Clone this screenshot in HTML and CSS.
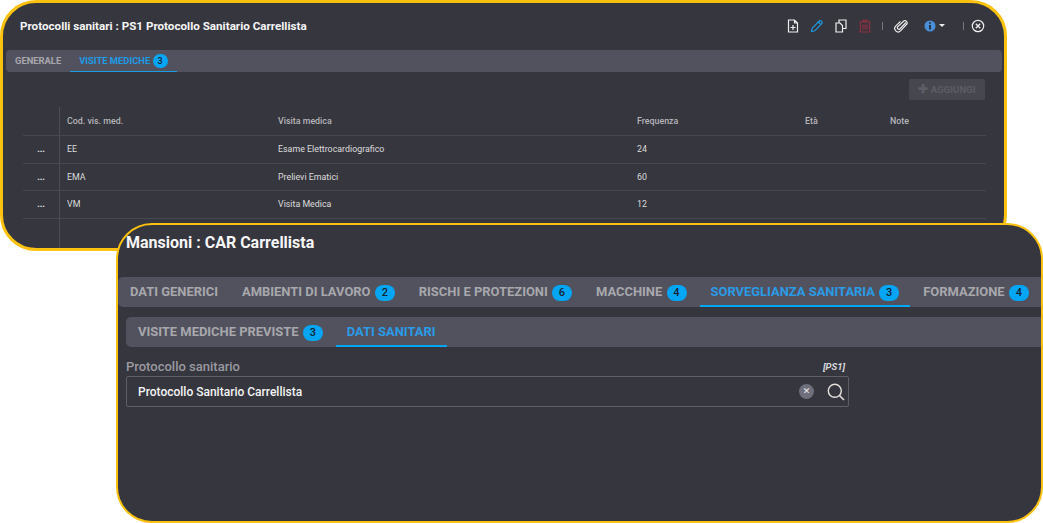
FILE: index.html
```html
<!DOCTYPE html>
<html lang="it">
<head>
<meta charset="utf-8">
<title>Protocolli sanitari</title>
<link rel="stylesheet" href="styles.css">
</head>
<body>
<div class="win win1">
	<div class="head1">
		<h1 class="title1">Protocolli sanitari : PS1 Protocollo Sanitario Carrellista</h1>
		<div class="tools">
			<svg class="ico" viewBox="0 0 14 14"><path d="M2.500 1h6l3 3v9h-9z M8.500 1v3h3 M7 6v5 M4.500 8.500h5" fill="none" stroke="#eee" stroke-width="1.200"/></svg>
			<svg class="ico ml10" viewBox="0 0 14 14"><path d="M1.500 12.500l.7-3.300 7-7.200a1.400 1.400 0 0 1 2 0l.6.6a1.400 1.400 0 0 1 0 2l-7 7.200z M8.300 3l2.700 2.700" fill="none" stroke="#1c9be6" stroke-width="1.200"/></svg>
			<svg class="ico ml10" viewBox="0 0 14 14"><path d="M5 4V1h7v8.500H9 M2 4h4l2.500 2.500V13H2z" fill="none" stroke="#eee" stroke-width="1.200"/></svg>
			<svg class="ico ml10" viewBox="0 0 14 14"><path d="M1.500 2.800h11 M5 2.800V1.300h4v1.500 M2.300 2.800h9.400V13H2.300z M5 5.500v5 M7 5.500v5 M9 5.500v5" fill="none" stroke="#8e2f40" stroke-width="1.200"/></svg>
			<span class="sep sep1"></span>
			<svg class="ico ml11" viewBox="0 0 14 14"><path d="M12 3.500L5.800 10a1.500 1.500 0 0 1-2.100-2.100L10 1.800a2.400 2.400 0 0 1 3 3.200l-6.500 6.800a3.300 3.300 0 0 1-4.800-4.600L6.500 2.300" fill="none" stroke="#eee" stroke-width="1.200"/></svg>
			<svg class="ico ml15" viewBox="0 0 14 14"><circle cx="7" cy="7" r="5.500" fill="#4a90d9"/><path d="M7 3.300v1.500 M7 6v4.500" stroke="#20242c" stroke-width="1.700"/></svg>
			<span class="caret"></span>
			<span class="sep sep2"></span>
			<svg class="ico" viewBox="0 0 14 14"><circle cx="7" cy="7" r="5.700" fill="none" stroke="#eee" stroke-width="1.200"/><path d="M4.800 4.800l4.400 4.400 M9.200 4.800l-4.400 4.400" stroke="#eee" stroke-width="1.300"/></svg>
		</div>
	</div>
	<div class="tabs1">
		<a class="tab1">GENERALE</a>
		<a class="tab1 on">VISITE MEDICHE <span class="badge1">3</span></a>
	</div>
	<div class="actions">
		<a class="btnAdd"><span class="plus">✚</span> AGGIUNGI</a>
	</div>
	<div class="grid">
		<div class="row rowHead">
			<div class="c0"></div><div class="c1">Cod. vis. med.</div><div class="c2">Visita medica</div><div class="c3">Frequenza</div><div class="c4">Età</div><div class="c5">Note</div>
		</div>
		<div class="row">
			<div class="c0">...</div><div class="c1">EE</div><div class="c2">Esame Elettrocardiografico</div><div class="c3">24</div><div class="c4"></div><div class="c5"></div>
		</div>
		<div class="row">
			<div class="c0">...</div><div class="c1">EMA</div><div class="c2">Prelievi Ematici</div><div class="c3">60</div><div class="c4"></div><div class="c5"></div>
		</div>
		<div class="row">
			<div class="c0">...</div><div class="c1">VM</div><div class="c2">Visita Medica</div><div class="c3">12</div><div class="c4"></div><div class="c5"></div>
		</div>
		<div class="row rowEmpty"><div class="c0"></div></div>
	</div>
</div>

<div class="win win2">
	<h2 class="title2">Mansioni : CAR Carrellista</h2>
	<div class="tabs2">
		<a class="tab2">DATI GENERICI</a>
		<a class="tab2">AMBIENTI DI LAVORO <span class="badge2">2</span></a>
		<a class="tab2">RISCHI E PROTEZIONI <span class="badge2">6</span></a>
		<a class="tab2">MACCHINE <span class="badge2">4</span></a>
		<a class="tab2 on">SORVEGLIANZA SANITARIA <span class="badge2">3</span></a>
		<a class="tab2">FORMAZIONE <span class="badge2">4</span></a>
	</div>
	<div class="tabs3">
		<a class="tab2">VISITE MEDICHE PREVISTE <span class="badge2">3</span></a>
		<a class="tab2 on">DATI SANITARI</a>
	</div>
	<div class="field">
		<div class="fieldTop">
			<label class="lbl">Protocollo sanitario</label>
			<span class="code">[PS1]</span>
		</div>
		<div class="inp">
			<span class="val">Protocollo Sanitario Carrellista</span>
			<span class="clear">✕</span>
			<svg class="lens" viewBox="0 0 18 18"><circle cx="7.800" cy="7.800" r="6.500" fill="none" stroke="#e4e0da" stroke-width="1.400"/><path d="M12.500 12.500l4.500 4.500" stroke="#e4e0da" stroke-width="1.600"/></svg>
		</div>
	</div>
</div>
</body>
</html>
```

FILE: styles.css
```css
html, body {margin:0; padding:0; height:523px; overflow:hidden; background:#fff;}
body {position:relative; font-family:Roboto, "Liberation Sans", sans-serif;}
h1, h2 {margin:0;}
a {text-decoration:none;}

.win {position:absolute; box-sizing:border-box; background:#36363f; border:2px solid #fdc20f; overflow:hidden;}
.win1 {left:0; top:0; width:1007px; height:251px; border-width:3px; border-radius:36px;}
.win2 {left:116px; top:223px; width:927px; height:300px; border-radius:36px;}

/* window 1 */
.head1 {display:flex; align-items:center; justify-content:space-between; height:45px; padding:0 19px 0 17px;}
.title1 {font-size:11.650px; font-weight:700; color:#f4f4f4;}
.tools {display:flex; align-items:center;}
.ico {width:14px; height:14px; display:block;}
.ml10 {margin-left:10px;}
.ml11 {margin-left:11px;}
.ml15 {margin-left:15px;}
.sep {width:1px; height:8px; background:#777;}
.sep1 {margin-left:10px;}
.sep2 {margin-left:18px; margin-right:7px;}
.caret {margin-left:2px; border:3px solid transparent; border-top:3px solid #eee; border-bottom:0;}

.tabs1 {display:flex; height:22px; margin:2px 2px 0 3px; background:#52525f; border-radius:4px;}
.tab1 {padding:0 9px; line-height:22px; font-size:9.400px; font-weight:700; color:#a8a8ac; box-sizing:border-box; height:22px;}
.tab1.on {color:#1c9be6; border-bottom:1px solid #1c9be6;}
.badge1 {display:inline-block; width:15px; height:14px; line-height:14px; border-radius:7px; background:#03a6f5; color:#123; text-align:center; font-size:9px; font-weight:500; vertical-align:0;}

.actions {display:flex; justify-content:flex-end; margin:7px 19px 0 0;}
.btnAdd {width:76px; height:21px; line-height:21px; background:#47474f; border-radius:2px; color:#5d5d66; font-size:9.600px; font-weight:700; text-align:center;}
.plus {font-size:12px;}

.grid {margin:7px 18px 0 20px; font-size:8.850px; color:#dcdcdc;}
.row {display:flex; height:27.500px; line-height:27px; border-bottom:1px solid #47474f; box-sizing:border-box;}
.rowHead {height:29px; line-height:29px; font-weight:500; color:#b5b5b8;}
.rowEmpty {height:40px; border-bottom:0;}
.c0 {width:37px; box-sizing:border-box; border-right:1px solid #4d4d56; text-align:center; font-weight:700; color:#eee;}
.c1 {width:218px; padding-left:7px; box-sizing:border-box;}
.c2 {width:359px;}
.c3 {width:168px;}
.c4 {width:85px;}
.c5 {flex:1;}

/* window 2 */
.title2 {height:38px; padding:8px 0 0 8px; box-sizing:border-box; font-size:16px; font-weight:700; line-height:20px; color:#f6f6f8;}
.tabs2 {display:flex; height:30px; margin-top:14px; padding-left:1px; background:#52525f; border-radius:5px 0 0 5px;}
.tab2 {padding:0 11px; line-height:29px; font-size:12.950px; font-weight:700; color:#a8a8ac; white-space:nowrap; box-sizing:border-box; height:30px;}
.tabs2 .tab2, .tabs3 .tab2 {margin-right:2px;}
.tab2.on {color:#2a9be6; border-bottom:2px solid #03a6f5;}
.badge2 {display:inline-block; width:20px; height:16px; line-height:16px; margin-left:1px; border-radius:8px; background:#03a6f5; color:#123; text-align:center; font-size:11px; font-weight:500; vertical-align:0;}
.tabs3 {display:flex; height:30px; margin:10px 0 0 8px; padding-left:1px; background:#52525f; border-radius:5px 0 0 5px;}

.field {width:723px; margin:11px 0 0 8px;}
.fieldTop {display:flex; justify-content:space-between; align-items:flex-end; height:18px;}
.lbl {font-size:13px; font-weight:500; color:#9a9a9f; line-height:18px;}
.code {margin-right:4px; font-size:9.500px; font-weight:700; font-style:italic; color:#d8d8dc; line-height:18px;}
.inp {display:flex; align-items:center; height:31px; box-sizing:border-box; border:1.500px solid #5f5f68; border-radius:2px; padding:0 3px 0 11px;}
.val {flex:1; font-size:12px; font-weight:500; color:#f4f4f4;}
.clear {width:15px; height:15px; line-height:15px; border-radius:50%; background:#6f6f7b; color:#eee; text-align:center; font-size:9px; font-weight:700; font-family:"DejaVu Sans", sans-serif;}
.lens {width:18px; height:18px; margin-left:13px; display:block;}
```
